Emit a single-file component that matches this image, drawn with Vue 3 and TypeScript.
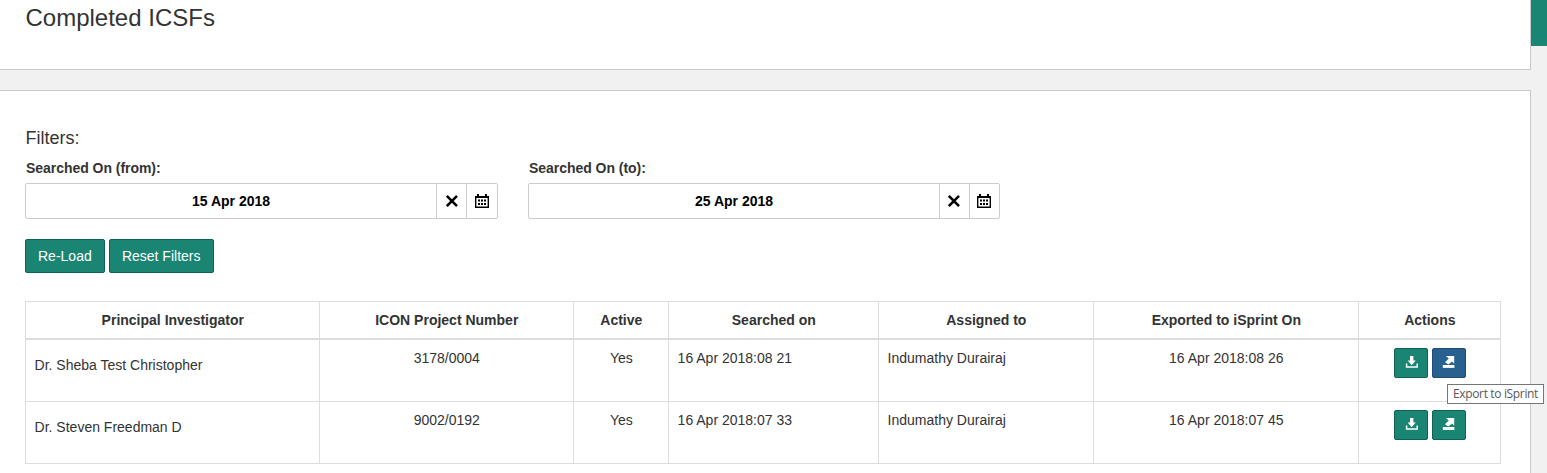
<script setup lang="ts">
interface DateFilter {
  label: string
  value: string
}

interface Row {
  investigator: string
  project: string
  active: string
  searchedOn: string
  assignedTo: string
  exportedOn: string
  hovered: boolean
}

const filters: DateFilter[] = [
  { label: 'Searched On (from):', value: '15 Apr 2018' },
  { label: 'Searched On (to):', value: '25 Apr 2018' },
]

const headings: string[] = [
  'Principal Investigator',
  'ICON Project Number',
  'Active',
  'Searched on',
  'Assigned to',
  'Exported to iSprint On',
  'Actions',
]

const rows: Row[] = [
  {
    investigator: 'Dr. Sheba Test Christopher',
    project: '3178/0004',
    active: 'Yes',
    searchedOn: '16 Apr 2018:08 21',
    assignedTo: 'Indumathy Durairaj',
    exportedOn: '16 Apr 2018:08 26',
    hovered: true,
  },
  {
    investigator: 'Dr. Steven Freedman D',
    project: '9002/0192',
    active: 'Yes',
    searchedOn: '16 Apr 2018:07 33',
    assignedTo: 'Indumathy Durairaj',
    exportedOn: '16 Apr 2018:07 45',
    hovered: false,
  },
]
</script>

<template>
  <div class="page">
    <main class="content">
      <header class="panel title-panel">
        <h1>Completed ICSFs</h1>
      </header>

      <section class="panel list-panel">
        <h2>Filters:</h2>
        <div class="filters">
          <div v-for="f in filters" :key="f.label" class="filter">
            <label>{{ f.label }}</label>
            <div class="date-input">
              <span class="date-value">{{ f.value }}</span>
              <button class="addon" type="button" aria-label="Clear">
                <svg width="14" height="14" viewBox="0 0 14 14">
                  <path d="M1.8 1.9 12 12.1M12 1.9 1.8 12.1" stroke="#000" stroke-width="2.6" fill="none" />
                </svg>
              </button>
              <button class="addon" type="button" aria-label="Pick date">
                <svg width="14" height="14" viewBox="0 0 14 14">
                  <path d="M0 2h14v12H0zM1.4 4v8.6h11.2V4z" fill="#000" fill-rule="evenodd" />
                  <path d="M2 0h2v3H2zM10 0h2v3h-2z" fill="#000" />
                  <path d="M3 5.5h2v2H3zM6 5.5h2v2H6zM9 5.5h2v2H9zM3 9h2v2H3zM6 9h2v2H6zM9 9h2v2H9z" fill="#000" />
                </svg>
              </button>
            </div>
          </div>
        </div>

        <div class="buttons">
          <button class="btn" type="button">Re-Load</button>
          <button class="btn reset" type="button">Reset Filters</button>
        </div>

        <div class="table">
          <div class="row head">
            <div v-for="h in headings" :key="h" class="cell">{{ h }}</div>
          </div>
          <div v-for="r in rows" :key="r.investigator" class="row">
            <div class="cell name">{{ r.investigator }}</div>
            <div class="cell center">{{ r.project }}</div>
            <div class="cell center">{{ r.active }}</div>
            <div class="cell">{{ r.searchedOn }}</div>
            <div class="cell">{{ r.assignedTo }}</div>
            <div class="cell center">{{ r.exportedOn }}</div>
            <div class="cell actions">
              <button class="btn icon" type="button" aria-label="Download">
                <svg width="14" height="14" viewBox="0 0 14 14">
                  <path d="M6 0h3.4v4.6h2.4L7.7 9.2 3.6 4.6H6z" fill="#fff" />
                  <path d="M2.6 7.6v3.4h10.6V7.6" stroke="#fff" stroke-width="1.5" fill="none" />
                </svg>
              </button>
              <button class="btn icon" :class="{ hovered: r.hovered }" type="button" aria-label="Export to iSprint">
                <svg width="14" height="14" viewBox="0 0 14 14">
                  <path d="M3.8 0h8.4v7.8L10 5.6 6.4 8.4 3 6.2 6.8 2.6z" fill="#fff" />
                  <path d="M.8 9h11.6v2.9H.8z" fill="#fff" />
                </svg>
              </button>
              <span v-if="r.hovered" class="tooltip">Export to iSprint</span>
            </div>
          </div>
        </div>
      </section>
    </main>
    <aside class="rail"></aside>
  </div>
</template>

<style>
body {
  margin: 0;
  overflow: hidden;
}
</style>

<style scoped>
.page {
  display: flex;
  height: 473px;
  overflow: hidden;
  background: #f1f1f1;
  color: #333;
  font: 14px/20px "Liberation Sans", Arial, sans-serif;
}
.content {
  width: 1531px;
  flex: none;
}
.rail {
  flex: 1;
  height: 46px;
  background: #1a8573;
}
.panel {
  box-sizing: border-box;
  background: #fff;
  border-right: 1px solid #c9c9c9;
}
.title-panel {
  height: 70px;
  border-bottom: 1px solid #c9c9c9;
  padding: 4px 0 0 25px;
}
h1 {
  margin: 0;
  padding-left: 0.5px;
  font-size: 24px;
  line-height: 28px;
  font-weight: 400;
}
.list-panel {
  margin-top: 20px;
  height: 400px;
  border-top: 1px solid #c9c9c9;
  padding: 36px 0 0 25px;
}
h2 {
  margin: 0;
  padding-left: 0.4px;
  font-size: 18px;
  line-height: 22px;
  font-weight: 400;
}
.filters {
  display: flex;
  gap: 30px;
  margin-top: 9px;
}
.filter {
  width: 473px;
}
.filter + .filter {
  width: 472px;
}
label {
  display: block;
  padding-left: 1px;
  font-weight: 700;
  letter-spacing: -0.04px;
}
.date-input {
  box-sizing: border-box;
  display: flex;
  height: 36px;
  margin-top: 5px;
  border: 1px solid #ccc;
  border-radius: 2px;
}
.date-value {
  flex: 1;
  line-height: 34px;
  text-align: center;
  font-weight: 700;
  color: #000;
}
.addon {
  box-sizing: border-box;
  display: flex;
  align-items: center;
  justify-content: center;
  width: 30px;
  padding: 0;
  border: 0;
  border-left: 1px solid #ccc;
  background: none;
}
.filter:first-child .addon:last-child {
  width: 31px;
}
.filter + .filter .addon {
  padding-right: 1px;
}
.buttons {
  display: flex;
  gap: 4px;
  margin-top: 20px;
}
.btn {
  box-sizing: border-box;
  height: 34px;
  padding: 0 12px;
  border: 1px solid #0f6253;
  border-radius: 2px;
  background: #1a8573;
  color: #fff;
  font: inherit;
  white-space: nowrap;
}
.reset {
  width: 105px;
}
.table {
  width: 1476px;
  margin-top: 28px;
  border-top: 1px solid #ddd;
}
.row {
  display: grid;
  grid-template-columns: 294px 254px 95px 210px 215px 265px 143px;
  height: 61px;
  border-bottom: 1px solid #ddd;
}
.row.head {
  height: 36px;
  border-bottom-width: 2px;
  font-weight: 700;
  text-align: center;
}
.cell {
  box-sizing: border-box;
  border-left: 1px solid #ddd;
  padding: 8px 8px 0 8.6px;
  white-space: nowrap;
}
.cell:last-child {
  border-right: 1px solid #ddd;
}
.center {
  text-align: center;
}
.name {
  padding-top: 15px;
}
.actions {
  position: relative;
  display: flex;
  justify-content: center;
  gap: 4px;
}
.btn.icon {
  display: flex;
  align-items: center;
  justify-content: center;
  width: 34px;
  height: 30px;
  padding: 0;
}
.hovered {
  background: #286090;
  border-color: #204d74;
}
.tooltip {
  position: absolute;
  z-index: 2;
  left: 88px;
  top: 44px;
  box-sizing: border-box;
  width: 97px;
  height: 20px;
  border: 1px solid #767676;
  background: #fff;
  color: #575757;
  font: 12px/18px "Open Sans", "Noto Sans", sans-serif;
  letter-spacing: -0.35px;
  text-align: center;
}
</style>
